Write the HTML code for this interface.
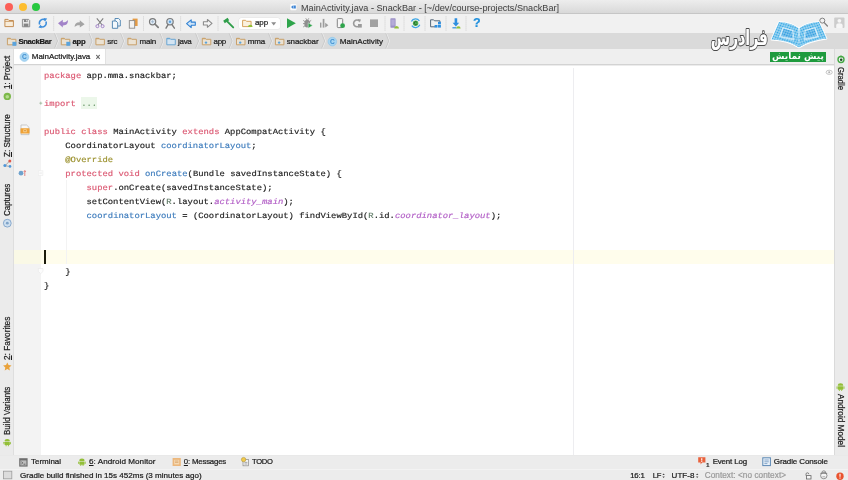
<!DOCTYPE html>
<html>
<head>
<meta charset="utf-8">
<title>MainActivity.java - SnackBar</title>
<style>
html,body{margin:0;padding:0;}
body{width:848px;height:480px;overflow:hidden;position:relative;background:#ececec;font-family:"Liberation Sans","DejaVu Sans",sans-serif;font-size:8px;color:#1c1c1c;}
#root{position:absolute;left:0;top:0;width:848px;height:480px;overflow:hidden;}
.abs{position:absolute;}
#titlebar{left:0;top:0;width:848px;height:13px;background:linear-gradient(#ededed,#d9d9d9);}
#titleline{left:0;top:13px;width:848px;height:1px;background:#c6c6c6;}
.tl{position:absolute;top:2.5px;width:8px;height:8px;border-radius:50%;}
#toolbar{left:0;top:14px;width:848px;height:19px;background:#f1f1f1;}
#navbar{left:0;top:33px;width:848px;height:15.6px;background:#dadada;}
#tabrow{left:0;top:48.6px;width:848px;height:16.4px;background:#efefef;}
#tabline{left:14px;top:64.2px;width:820px;height:1px;background:#d3d3d3;}
#tab{left:14px;top:48.6px;width:90.5px;height:16px;background:#fff;border-right:1px solid #e2e2e2;}
#leftstrip{left:0;top:49px;width:13.5px;height:406px;background:#ebebeb;border-right:1px solid #dedede;box-sizing:border-box;}
#rightstrip{left:833.5px;top:49px;width:14.5px;height:406px;background:#ebebeb;border-left:1px solid #dadada;box-sizing:border-box;}
#editor{left:13.5px;top:65.5px;width:820px;height:389.5px;background:#fff;}
#gutter{left:13.5px;top:65.5px;width:27px;height:389.5px;background:#f3f3f3;}
#caretrow{left:13.5px;top:250.4px;width:820px;height:14px;background:#fffdec;}
#caretrowg{left:13.5px;top:250.4px;width:27px;height:14px;background:#faf9e6;}
#caret{left:44px;top:250.4px;width:2px;height:13.2px;background:#1c1c0c;}
#margin{left:573.2px;top:68px;width:1.2px;height:387px;background:#ededf0;}
.guide{position:absolute;width:1px;background:#f3f3f3;}
#code{left:44px;top:69.7px;font-family:"Liberation Mono","DejaVu Sans Mono",monospace;font-size:8.875px;color:#222;-webkit-text-stroke:0.18px;text-rendering:geometricPrecision;}
.cl{position:absolute;left:0;height:15.556px;line-height:15.556px;white-space:pre;transform:scaleY(0.9);transform-origin:0 0;}
.k{color:#db5872;}
.f{color:#3f7dbd;}
.a{color:#9c9230;}
.s{color:#b25fc6;font-style:italic;}
.c{color:#5f7a66;}
.fold{color:#6f9a6f;}
#foldbg{left:80.6px;top:96.6px;width:16.4px;height:12.2px;background:#ecf7ea;}
#bottombar{left:0;top:455px;width:848px;height:14px;background:#ececec;border-top:1px solid #e9e9e9;box-sizing:border-box;}
#statusbar{left:0;top:469px;width:848px;height:11px;background:#ececec;border-top:1px solid #f3f3f3;box-sizing:border-box;}
.t{position:absolute;white-space:nowrap;line-height:12px;-webkit-text-stroke:0.22px;}
.v{transform-origin:0 0;color:#1c1c1c;}
#combo{left:238.8px;top:17.9px;width:40.8px;height:11.6px;background:#fff;border-radius:2.5px;box-shadow:0 0 0 0.5px #e4e4e4;}
#preview{left:770px;top:51.6px;width:56px;height:10.8px;background:#1f9b3e;}
#fg{position:absolute;left:0;top:0;width:848px;height:480px;will-change:transform;}
#previewt{left:770px;top:51.6px;width:56px;height:10.8px;color:#fff;font-family:"DejaVu Sans",sans-serif;font-weight:bold;font-size:9px;line-height:8.8px;text-align:center;direction:rtl;white-space:nowrap;}
#icons{left:0;top:0;width:848px;height:480px;}
</style>
</head>
<body>
<div id="root">
<div id="titlebar" class="abs"></div>
<div id="titleline" class="abs"></div>
<div class="tl" style="left:5px;background:#fc5f57;"></div>
<div class="tl" style="left:18.5px;background:#fdbd2e;"></div>
<div class="tl" style="left:32px;background:#27c83f;"></div>
<div id="toolbar" class="abs"></div>
<div id="navbar" class="abs"></div>
<div id="tabrow" class="abs"></div>
<div id="tab" class="abs"></div>
<div id="leftstrip" class="abs"></div>
<div id="editor" class="abs"></div>
<div id="gutter" class="abs"></div>
<div id="tabline" class="abs"></div>
<div id="caretrow" class="abs"></div>
<div id="caretrowg" class="abs"></div>
<div id="margin" class="abs"></div>
<div id="foldbg" class="abs"></div>
<div class="guide" style="left:66px;top:180px;height:84px;"></div>
<div id="caret" class="abs"></div>
<div id="rightstrip" class="abs"></div>

<div id="bottombar" class="abs"></div>
<div id="statusbar" class="abs"></div>
<div id="combo" class="abs"></div>
<div id="preview" class="abs"></div>
<div id="fg">
<div id="code" class="abs">
<div class="cl" style="top:0.0px"><span class="k">package</span> app.mma.snackbar;</div>
<div class="cl" style="top:28.0px"><span class="k">import</span> <span class="fold">...</span></div>
<div class="cl" style="top:56.0px"><span class="k">public class</span> MainActivity <span class="k">extends</span> AppCompatActivity {</div>
<div class="cl" style="top:70.0px">    CoordinatorLayout <span class="f">coordinatorLayout</span>;</div>
<div class="cl" style="top:84.0px">    <span class="a">@Override</span></div>
<div class="cl" style="top:98.0px">    <span class="k">protected void</span> <span class="f">onCreate</span>(Bundle savedInstanceState) {</div>
<div class="cl" style="top:112.0px">        <span class="k">super</span>.onCreate(savedInstanceState);</div>
<div class="cl" style="top:126.0px">        setContentView(<span class="c">R</span>.layout.<span class="s">activity_main</span>);</div>
<div class="cl" style="top:140.0px">        <span class="f">coordinatorLayout</span> = (CoordinatorLayout) findViewById(<span class="c">R</span>.id.<span class="s">coordinator_layout</span>);</div>
<div class="cl" style="top:196.0px">    }</div>
<div class="cl" style="top:210.0px">}</div>
</div>
<svg id="icons" class="abs" viewBox="0 0 848 480" width="848" height="480">
<defs>
<g id="fld"><path d="M0.5 1 h3 l0.9 1 h4.6 v5.5 h-8.5 z" fill="#ebe2d3" stroke="#c9a06a" stroke-width="1"/><path d="M0.5 1 h3 l0.9 1 h-3.9 z" fill="#c9a06a"/></g>
<g id="fldb"><path d="M0.5 1 h3 l0.9 1 h4.6 v5.5 h-8.5 z" fill="#d3e4f2" stroke="#6aa5d2" stroke-width="1"/><path d="M0.5 1 h3 l0.9 1 h-3.9 z" fill="#6aa5d2"/></g>
<g id="chev"><path d="M0 0.3 L3 8 L0 15.3" fill="none" stroke="#efefef" stroke-width="0.9" transform="translate(0.7,0)"/><path d="M0 0.3 L3 8 L0 15.3" fill="none" stroke="#c2c2c2" stroke-width="0.7"/></g>
<g id="droid"><path d="M1.2 3.4 a2.8 2.6 0 0 1 5.6 0 z" fill="#93bf38"/><rect x="1.2" y="3.9" width="5.6" height="3.6" rx="0.5" fill="#93bf38"/><rect x="0" y="3.9" width="0.9" height="2.8" rx="0.4" fill="#93bf38"/><rect x="7.1" y="3.9" width="0.9" height="2.8" rx="0.4" fill="#93bf38"/><rect x="2.3" y="7" width="1" height="1.8" rx="0.4" fill="#93bf38"/><rect x="4.7" y="7" width="1" height="1.8" rx="0.4" fill="#93bf38"/></g>
<g id="sep"><path d="M0 16.5 V31" stroke="#c4c4c4" stroke-width="0.9" stroke-dasharray="0.9 1.1"/></g>
<pattern id="grid" x="0" y="0" width="2.2" height="2.2" patternUnits="userSpaceOnUse"><rect x="0.3" y="0.3" width="1.6" height="1.6" fill="#4fb0e8"/></pattern>
</defs>

<!-- title icon -->
<rect x="290.3" y="4" width="6.2" height="6.2" rx="1" fill="#fbfbfb"/>
<path d="M291 7.1 l2.2 -1.8 v3.6 z M293.6 5.6 h2.2 v3 h-2.2 z" fill="#3f86d6"/>

<!-- toolbar separators -->
<use href="#sep" x="53.7"/><use href="#sep" x="89.4"/><use href="#sep" x="143.5"/><use href="#sep" x="180.6"/><use href="#sep" x="218"/><use href="#sep" x="385"/><use href="#sep" x="404"/><use href="#sep" x="425"/><use href="#sep" x="446"/><use href="#sep" x="466"/>

<!-- open -->
<path d="M4.9 19.4 h3.2 l0.9 1.1 h4.4 v6.1 h-8.5 z" fill="#f8ecd9" stroke="#c48f55" stroke-width="1"/>
<path d="M4.9 21.4 h8.5" stroke="#c48f55" stroke-width="0.8"/>
<!-- save -->
<path d="M22.4 19.4 h6.2 l1.1 1.1 v6.3 h-7.3 z" fill="#e6e6e6" stroke="#858585" stroke-width="0.9"/>
<rect x="24" y="19.4" width="3.6" height="2.6" fill="#858585"/><rect x="23.7" y="23.6" width="4.7" height="3.2" fill="#858585"/><rect x="26.2" y="19.8" width="0.9" height="1.6" fill="#e6e6e6"/>
<!-- sync -->
<g fill="none" stroke="#3f8fdc" stroke-width="1.5"><path d="M39.6 24.6 a3.6 3.9 0 0 1 5.6 -4.4"/><path d="M46 21.6 a3.6 3.9 0 0 1 -5.6 4.4"/></g>
<path d="M43.6 18 l3.6 0.6 l-2.2 2.8 z M42 28.2 l-3.6 -0.6 l2.2 -2.8 z" fill="#3f8fdc"/>
<!-- undo -->
<path d="M58 23.3 L62.8 27.4 L62.8 25.4 C66.2 25.5 68 24 68 20 C66.4 22 65 22.4 62.8 22.2 L62.8 19.8 Z" fill="#a283c8"/>
<!-- redo -->
<path d="M84.6 24.3 L79.8 20.2 L79.8 22.2 C76.4 22.1 74.6 23.6 74.6 27 C76.2 25.4 77.6 25.1 79.8 25.3 L79.8 27.4 Z" fill="#a4a4a4"/>
<!-- cut -->
<path d="M96.8 18.4 L102.2 25 M103.2 18.4 L97.8 25" stroke="#7d7d7d" stroke-width="1.1" fill="none"/>
<circle cx="97.4" cy="26.2" r="1.5" fill="none" stroke="#a283c8" stroke-width="1"/><circle cx="102.6" cy="26.2" r="1.5" fill="none" stroke="#a283c8" stroke-width="1"/>
<!-- copy -->
<path d="M115 18.5 h3.6 l1.7 1.7 v5.8 h-5.3 z" fill="#f3f8fc" stroke="#477fae" stroke-width="0.9"/>
<path d="M112.4 21 h3.6 l1.7 1.7 v5.6 h-5.3 z" fill="#f3f8fc" stroke="#477fae" stroke-width="0.9"/>
<!-- paste -->
<rect x="132.6" y="18.6" width="5" height="7.4" fill="#e49b45"/>
<rect x="129.3" y="20.6" width="5.4" height="7.6" fill="#f2f2f2" stroke="#8a8a8a" stroke-width="0.9"/>
<!-- find -->
<circle cx="152.6" cy="21.7" r="3.1" fill="#e1ecf6" stroke="#7b7b7b" stroke-width="1.2"/><path d="M154.9 24 L158.2 27.3" stroke="#7b7b7b" stroke-width="1.7" stroke-linecap="round"/><path d="M151 21.7 h3.2 M152.6 20.1 v3.2" stroke="#9ab0c8" stroke-width="0.7"/>
<!-- replace -->
<circle cx="170" cy="21.7" r="3.2" fill="#cfe4f7" stroke="#7b7b7b" stroke-width="1.2"/><path d="M168.2 24.4 L166 28.2 M171.8 24.4 L174.4 28.2" stroke="#7b7b7b" stroke-width="1.4" stroke-linecap="round"/><circle cx="170" cy="21.7" r="1.2" fill="#5fa3de"/>
<!-- back -->
<path d="M186.6 23.7 L191.2 19.8 L191.2 22.1 L195.3 22.1 L195.3 25.3 L191.2 25.3 L191.2 27.6 Z" fill="#cfe4f8" stroke="#2f80d2" stroke-width="1.1" stroke-linejoin="round"/>
<!-- forward -->
<path d="M212 23.4 L207.4 19.5 L207.4 21.8 L203.4 21.8 L203.4 25 L207.4 25 L207.4 27.3 Z" fill="#f4f4f4" stroke="#8b8b8b" stroke-width="1.1" stroke-linejoin="round"/>
<!-- hammer -->
<path d="M227.2 21.4 L233.2 27.4" stroke="#2f9e4a" stroke-width="1.9" stroke-linecap="round"/><path d="M224 22 L228.4 19" stroke="#2f9e4a" stroke-width="2.8"/>
<!-- combo content -->
<path d="M242.6 20.3 h3 l0.9 1 h4.6 v5.3 h-8.5 z" fill="#fbf1df" stroke="#d29a4e" stroke-width="0.9"/>
<path d="M248 26.9 a2.3 2.2 0 0 1 4.6 0 z" fill="#93bf38"/>
<path d="M271.2 22.2 h5 l-2.5 3.2 z" fill="#8d8d8d"/>
<!-- run -->
<path d="M287 18.2 L295.8 23.2 L287 28.2 Z" fill="#2ea44b"/>
<!-- debug -->
<ellipse cx="307.2" cy="23.6" rx="2.9" ry="3.9" fill="#8e8e8e"/><path d="M303.2 20.4 l2 1.4 M311.2 20.4 l-2 1.4 M303 23.6 h2 M303.2 27 l2 -1.4 M305.8 18.3 l1 1.6 M308.8 18.3 l-1 1.6" stroke="#8e8e8e" stroke-width="0.9"/>
<path d="M308.2 22.8 L312.6 25.5 L308.2 28.3 Z" fill="#2ea44b" stroke="#efefef" stroke-width="0.5"/>
<!-- profile -->
<rect x="320" y="22.6" width="1.4" height="5" fill="#9c9c9c"/><rect x="322.7" y="18.9" width="1.7" height="8.7" fill="#9c9c9c"/><path d="M325.2 22.8 L328.4 25.2 L325.2 27.6 Z" fill="#9c9c9c"/>
<!-- device -->
<rect x="337.3" y="18.6" width="5.4" height="9" rx="0.8" fill="#f6f6f6" stroke="#858585" stroke-width="1"/><circle cx="342.6" cy="25.7" r="2.4" fill="#2ea44b"/>
<!-- rerun -->
<path d="M359.4 21 a3.4 3.4 0 1 0 0.2 4.6" fill="none" stroke="#9a9a9a" stroke-width="1.6"/><path d="M357.8 19 l3.2 0.4 l-1.2 3 z" fill="#9a9a9a"/><rect x="358" y="24" width="3.8" height="3.6" fill="#9a9a9a"/>
<!-- stop -->
<rect x="370" y="19.4" width="8" height="7.6" fill="#a1a1a1"/>
<!-- avd -->
<rect x="390.4" y="18.3" width="5.2" height="9.4" rx="0.6" fill="#9c90c6"/><rect x="391.3" y="19.6" width="3.4" height="6" fill="#b4abd8"/>
<path d="M394.2 28.4 a2.4 2.5 0 0 1 4.8 0 z" fill="#93bf38"/>
<!-- gradle sync -->
<g fill="none" stroke="#3fa7e6" stroke-width="1.3"><path d="M411.4 21.6 a4.6 4.6 0 0 1 8 -0.6"/><path d="M419.8 24.8 a4.6 4.6 0 0 1 -8 0.8"/></g>
<circle cx="415.6" cy="23.2" r="2.7" fill="#4caf50"/><path d="M416.8 22.2 a1.5 1.5 0 1 0 0 2" fill="none" stroke="#225a2a" stroke-width="0.9"/>
<!-- project structure -->
<path d="M430.6 19.8 h3 l0.9 1 h5.4 v2.4 M435 26.8 h-4.4 v-7" fill="none" stroke="#56677a" stroke-width="1"/>
<rect x="438" y="21.8" width="2.9" height="2.6" fill="#2f8fe0"/><rect x="438" y="25" width="2.9" height="2.6" fill="#2f8fe0"/><rect x="434.6" y="25" width="2.9" height="2.6" fill="#2f8fe0"/>
<!-- sdk -->
<path d="M454.6 18.2 h2.6 v4.6 h2 l-3.3 3.6 l-3.3 -3.6 h2 z" fill="#2f8fe0"/><rect x="452.4" y="27.2" width="4" height="1.2" fill="#2f8fe0"/>
<path d="M456.2 28.5 a2.2 2.3 0 0 1 4.4 0 z" fill="#93bf38"/>

<!-- top-right search / user -->
<circle cx="822.3" cy="20.6" r="2.5" fill="none" stroke="#808080" stroke-width="1"/><path d="M824.2 22.6 L827.4 26" stroke="#808080" stroke-width="1.3" stroke-linecap="round"/>
<rect x="834.2" y="17.4" width="10.3" height="10.6" rx="1" fill="#cdcdcd"/><circle cx="839.4" cy="20.8" r="1.9" fill="#f6f6f6"/><path d="M836.2 28 v-2.4 a3.2 2.4 0 0 1 6.4 0 v2.4 z" fill="#f6f6f6"/>

<!-- nav bar -->
<use href="#fld" x="6.9" y="37.3"/><rect x="12.4" y="41.8" width="4" height="4" fill="#5aa3dc"/>
<use href="#fld" x="60.8" y="37.3"/><rect x="66.3" y="41.8" width="4" height="4" fill="#5aa3dc"/>
<use href="#fld" x="95.4" y="37.3"/>
<use href="#fld" x="127.4" y="37.3"/>
<use href="#fldb" x="166.3" y="37.3"/>
<use href="#fld" x="201.8" y="37.3"/><circle cx="206" cy="42.6" r="1.2" fill="#5aa3dc"/>
<use href="#fld" x="236" y="37.3"/><circle cx="240.2" cy="42.6" r="1.2" fill="#5aa3dc"/>
<use href="#fld" x="274.9" y="37.3"/><circle cx="279.1" cy="42.6" r="1.2" fill="#5aa3dc"/>
<circle cx="332.3" cy="41.6" r="4.3" fill="#a9d6f3" stroke="#8cc4ea" stroke-width="0.6"/>
<text x="332.3" y="44" font-family="Liberation Sans, sans-serif" font-size="6.6" font-weight="bold" fill="#3f8fd0" text-anchor="middle">C</text>
<use href="#chev" x="54.6" y="33"/><use href="#chev" x="89.1" y="33"/><use href="#chev" x="120.7" y="33"/><use href="#chev" x="160" y="33"/><use href="#chev" x="195.6" y="33"/><use href="#chev" x="229.2" y="33"/><use href="#chev" x="268.6" y="33"/><use href="#chev" x="321.7" y="33"/><use href="#chev" x="385.8" y="33"/>
<!-- tab icon -->
<circle cx="24.4" cy="57" r="4.4" fill="#a9d6f3" stroke="#8cc4ea" stroke-width="0.6"/>
<text x="24.4" y="59.4" font-family="Liberation Sans, sans-serif" font-size="6.6" font-weight="bold" fill="#3f8fd0" text-anchor="middle">C</text>

<!-- faradars logo -->
<g>
<clipPath id="cpL"><path d="M779 22 C786 22.3 793 24 798.4 28.2 L799 47.5 C792 42.6 782 40 771.4 39.6 Z"/></clipPath>
<clipPath id="cpR"><path d="M819 22 C812 22.3 805 24 799.6 28.2 L799 47.5 C806 42.6 816 40 826.6 38.6 Z"/></clipPath>
<path d="M779 22 C786 22.3 793 24 798.4 28.2 L799 47.5 C792 42.6 782 40 771.4 39.6 Z M819 22 C812 22.3 805 24 799.6 28.2 L799 47.5 C806 42.6 816 40 826.6 38.6 Z" fill="#fff" stroke="#fff" stroke-width="1.6" stroke-linejoin="round"/>
<pattern id="gridL" width="2.3" height="2.3" patternUnits="userSpaceOnUse" patternTransform="matrix(1 0.3 -0.42 1 0 0)"><rect x="0.25" y="0.25" width="1.85" height="1.85" fill="#2fa5e3"/></pattern>
<pattern id="gridR" width="2.3" height="2.3" patternUnits="userSpaceOnUse" patternTransform="matrix(1 -0.3 0.42 1 0 0)"><rect x="0.25" y="0.25" width="1.85" height="1.85" fill="#2fa5e3"/></pattern>
<pattern id="gridLd" width="2.3" height="2.3" patternUnits="userSpaceOnUse" patternTransform="matrix(1 0.3 -0.42 1 0 0)"><rect x="0.25" y="0.25" width="1.85" height="1.85" fill="#2a9ade"/></pattern>
<pattern id="gridRd" width="2.3" height="2.3" patternUnits="userSpaceOnUse" patternTransform="matrix(1 -0.3 0.42 1 0 0)"><rect x="0.25" y="0.25" width="1.85" height="1.85" fill="#2a9ade"/></pattern>
<g clip-path="url(#cpL)"><rect x="765" y="18" width="40" height="34" fill="url(#gridL)"/>
<path d="M782.5 27 L793.5 30 L794 40.5 L779 37 Z" fill="#fff" opacity="0.62"/><path d="M783.5 28.6 L792.3 31 L792.7 38.6 L781.2 36 Z" fill="url(#gridLd)"/></g>
<g clip-path="url(#cpR)"><rect x="795" y="18" width="40" height="34" fill="url(#gridR)"/>
<path d="M815.5 27 L804.5 30 L804 40.5 L819 37 Z" fill="#fff" opacity="0.62"/><path d="M814.5 28.6 L805.7 31 L805.3 38.6 L816.8 36 Z" fill="url(#gridRd)"/></g>
<g transform="translate(739.4 44.7) scale(0.70 1.07)" text-anchor="middle" font-family="DejaVu Sans, sans-serif" font-weight="bold" font-size="20" stroke-linejoin="round">
<text x="0" y="0" fill="#4a4a4a" stroke="#4a4a4a" stroke-width="1.9" vector-effect="non-scaling-stroke">فرادرس</text>
<text x="0" y="0" fill="#fff" stroke="#fff" stroke-width="0.1" vector-effect="non-scaling-stroke">فرادرس</text>
</g>
</g>

<!-- eye -->
<ellipse cx="829.2" cy="72.3" rx="3.1" ry="2.1" fill="#fafafa" stroke="#b0b0b0" stroke-width="0.7"/><circle cx="829.2" cy="72.3" r="1" fill="#b0b0b0"/>

<!-- right strip -->
<circle cx="841" cy="59.5" r="3" fill="#f4f4f4" stroke="#45a845" stroke-width="1.4"/><circle cx="841.2" cy="59.7" r="1.3" fill="#1f4f28"/><path d="M839 56.6 l2.4 -1.4 l0.2 2.6 z" fill="#45a845"/>
<g transform="translate(836.6 382.6) scale(0.98 0.95)"><use href="#droid"/></g>

<!-- left strip icons -->
<circle cx="7.3" cy="96.4" r="3.7" fill="#7cb84a"/><circle cx="7.3" cy="96.8" r="1.8" fill="#b5dc8e"/>
<path d="M5 165.8 L9.6 161 M5 165.8 L10 166.4" stroke="#8c8c8c" stroke-width="0.7"/><circle cx="4.9" cy="165.6" r="1.5" fill="#4f96d8"/><circle cx="9.8" cy="161" r="1.5" fill="#e0584a"/><circle cx="10" cy="166.4" r="1.3" fill="#4f96d8"/>
<circle cx="7.3" cy="223.2" r="3.9" fill="#cfe0f0" stroke="#7fa3c8" stroke-width="0.9"/><circle cx="7.3" cy="223.2" r="1.4" fill="#7fa3c8"/>
<path d="M7.3 362.4 l1.25 2.7 l2.95 0.35 l-2.2 2 l0.6 2.95 l-2.6 -1.5 l-2.6 1.5 l0.6 -2.95 l-2.2 -2 l2.95 -0.35 z" fill="#e9a23b"/>
<g transform="translate(3.5 438.2) scale(0.93 0.92)"><use href="#droid"/></g>

<!-- gutter icons -->
<path d="M21 125 h5.6 l2.4 2.4 v7.2 h-8 z" fill="#f7f7f7" stroke="#b4b4b4" stroke-width="0.7"/><rect x="20.5" y="128.2" width="9" height="5.2" rx="0.6" fill="#f0a236"/><rect x="23.4" y="129.4" width="3.2" height="2.8" fill="#fbd9a0"/><circle cx="25" cy="130.8" r="0.8" fill="#c9801f"/>
<circle cx="21" cy="173.2" r="2.35" fill="#6ea2cd"/><path d="M24.8 176 v-5.2 M23.8 171.9 l1 -1.4 l1 1.4" stroke="#e07a78" stroke-width="0.9" fill="none"/>
<path d="M39.3 103.2 h3 M40.8 101.7 v3" stroke="#8fb08f" stroke-width="0.7"/>
<rect x="38.3" y="170.8" width="4.6" height="4.6" fill="#fcfcfc" stroke="#ebebeb" stroke-width="0.6"/><path d="M39.4 173.1 h2.4" stroke="#dcdcdc" stroke-width="0.6"/>
<path d="M38.4 268.5 h4.6 v3 l-2.3 2.2 l-2.3 -2.2 z" fill="#fcfcfc" stroke="#e8e8e8" stroke-width="0.6"/>

<!-- bottom bar icons -->
<rect x="19.2" y="458.2" width="8.4" height="8.4" fill="#6e6e6e"/><rect x="20.4" y="460.4" width="6" height="5" fill="#bdbdbd"/><path d="M21.4 461.8 l1.4 1.1 l-1.4 1.1 M23.6 464.2 h1.8" stroke="#444" stroke-width="0.7" fill="none"/>
<g transform="translate(78.2 457.8) scale(0.93 0.92)"><use href="#droid"/></g>
<rect x="172.6" y="458" width="8.2" height="8" fill="#ecb77c"/><rect x="174.2" y="459.8" width="5" height="4.6" fill="#f6d9b4"/><path d="M175 461 h3.4 M175 462.4 h3.4" stroke="#d09550" stroke-width="0.6"/>
<rect x="243" y="459.6" width="5.6" height="6.2" fill="#f3f3f3" stroke="#8a8a8a" stroke-width="0.7"/><circle cx="243.6" cy="459.6" r="2.2" fill="#f2c94c" stroke="#a58a2a" stroke-width="0.5"/><path d="M244.4 462.4 h3 M244.4 464 h3" stroke="#777" stroke-width="0.6"/>
<path d="M698.2 457.2 h7.2 v5.4 h-3.2 l-1.6 1.8 v-1.8 h-2.4 z" fill="#e9623c"/><rect x="701.2" y="458.2" width="1.1" height="2.4" fill="#fff"/><rect x="701.2" y="461" width="1.1" height="0.9" fill="#fff"/>
<rect x="762.8" y="457.8" width="7.6" height="7.8" fill="#eaf2fa" stroke="#5b88b4" stroke-width="1"/><path d="M764.4 460 h4.4 M764.4 461.8 h4.4 M764.4 463.6 h3" stroke="#5b88b4" stroke-width="0.7"/>

<!-- status bar icons -->
<rect x="3.4" y="471.2" width="8.4" height="7.6" fill="#dcdcdc" stroke="#9c9c9c" stroke-width="0.8"/>
<path d="M662.4 475 l1.2 -1.6 l1.2 1.6 z M662.4 476.4 l1.2 1.6 l1.2 -1.6 z" fill="#444"/>
<path d="M696 475 l1.2 -1.6 l1.2 1.6 z M696 476.4 l1.2 1.6 l1.2 -1.6 z" fill="#444"/>
<rect x="806.6" y="475.6" width="4.4" height="3.4" fill="#f4f4f4" stroke="#666" stroke-width="0.8"/><path d="M806 475.6 v-1.4 a1.4 1.4 0 0 1 2.8 0" fill="none" stroke="#666" stroke-width="0.8"/>
<circle cx="823.8" cy="475.6" r="3.2" fill="#f4f4f4" stroke="#777" stroke-width="0.8"/><path d="M820.4 473.4 h6.8 M821.8 473.2 a2 2.4 0 0 1 4 0" stroke="#777" stroke-width="0.8" fill="none"/><path d="M822.4 476.8 h2.8" stroke="#777" stroke-width="0.6"/>
<circle cx="840" cy="476.2" r="3.7" fill="#e9532f"/><rect x="839.45" y="473.8" width="1.1" height="3" fill="#fff"/><rect x="839.45" y="477.5" width="1.1" height="1.1" fill="#fff"/>
</svg>

<div id="previewt" class="abs">پیش نمایش</div>
<div class="t" style="left:301.0px;top:1.6px;font-size:9.1px;letter-spacing:0.02px;color:#454545;-webkit-text-stroke:0.05px;">MainActivity.java - SnackBar - [~/dev/course-projects/SnackBar]</div>
<div class="t" style="left:18.4px;top:35.9px;font-size:7.7px;letter-spacing:-0.31px;color:#1c1c1c;font-weight:bold;">SnackBar</div>
<div class="t" style="left:72.6px;top:35.9px;font-size:7.7px;letter-spacing:-0.29px;color:#1c1c1c;font-weight:bold;">app</div>
<div class="t" style="left:107.3px;top:35.9px;font-size:8px;letter-spacing:-0.26px;color:#1c1c1c;">src</div>
<div class="t" style="left:139.6px;top:35.9px;font-size:8px;letter-spacing:-0.21px;color:#1c1c1c;">main</div>
<div class="t" style="left:178.0px;top:35.9px;font-size:8px;letter-spacing:-0.30px;color:#1c1c1c;">java</div>
<div class="t" style="left:213.6px;top:35.9px;font-size:8px;letter-spacing:-0.39px;color:#1c1c1c;">app</div>
<div class="t" style="left:247.8px;top:35.9px;font-size:8px;letter-spacing:-0.19px;color:#1c1c1c;">mma</div>
<div class="t" style="left:286.7px;top:35.9px;font-size:8px;letter-spacing:-0.08px;color:#1c1c1c;">snackbar</div>
<div class="t" style="left:339.8px;top:35.9px;font-size:8.1px;letter-spacing:0.00px;color:#1c1c1c;">MainActivity</div>
<div class="t" style="left:31.8px;top:51.3px;font-size:8px;letter-spacing:-0.03px;color:#1c1c1c;">MainActivity.java</div>
<div class="t" style="left:95.5px;top:51.1px;font-size:8.5px;letter-spacing:-0.27px;color:#555;">×</div>
<div class="t" style="left:255.0px;top:17.2px;font-size:8px;letter-spacing:-0.12px;color:#222;">app</div>
<div class="t" style="left:31.0px;top:456.0px;font-size:8px;letter-spacing:-0.03px;color:#1c1c1c;">Terminal</div>
<div class="t" style="left:89.0px;top:456.0px;font-size:8.1px;letter-spacing:0.05px;color:#1c1c1c;"><u>6</u>: Android Monitor</div>
<div class="t" style="left:183.8px;top:456.0px;font-size:7.8px;letter-spacing:-0.18px;color:#1c1c1c;"><u>0</u>: Messages</div>
<div class="t" style="left:252.0px;top:456.0px;font-size:7.6px;letter-spacing:-0.28px;color:#1c1c1c;">TODO</div>
<div class="t" style="left:712.7px;top:456.0px;font-size:7.9px;letter-spacing:-0.15px;color:#1c1c1c;">Event Log</div>
<div class="t" style="left:773.8px;top:456.0px;font-size:8px;letter-spacing:-0.11px;color:#1c1c1c;">Gradle Console</div>
<div class="t" style="left:20.0px;top:470.4px;font-size:8.05px;letter-spacing:-0.00px;color:#1c1c1c;">Gradle build finished in 15s 452ms (3 minutes ago)</div>
<div class="t" style="left:630.2px;top:470.4px;font-size:7.8px;letter-spacing:-0.17px;color:#1c1c1c;">16:1</div>
<div class="t" style="left:652.8px;top:470.4px;font-size:7.6px;letter-spacing:-0.34px;color:#1c1c1c;">LF</div>
<div class="t" style="left:671.6px;top:470.4px;font-size:8px;letter-spacing:0.05px;color:#1c1c1c;">UTF-8</div>
<div class="t" style="left:704.7px;top:470.4px;font-size:8.2px;letter-spacing:0.06px;color:#9a9a9a;">Context: &lt;no context&gt;</div>
<div class="t" style="left:706.3px;top:458.7px;font-size:5.5px;letter-spacing:-0.36px;color:#333;font-weight:bold;">1</div>
<div class="t" style="left:473.0px;top:17.2px;font-size:12.5px;letter-spacing:-0.64px;color:#1f8fdc;font-weight:bold;">?</div>
<div class="t v" style="left:1.3px;top:88.6px;transform:rotate(-90deg) scaleX(0.907);font-size:8.7px;"><u>1</u>: Project</div>
<div class="t v" style="left:1.3px;top:157.3px;transform:rotate(-90deg) scaleX(0.941);font-size:8.7px;"><u>Z</u>: Structure</div>
<div class="t v" style="left:1.3px;top:215.8px;transform:rotate(-90deg) scaleX(0.916);font-size:8.7px;">Captures</div>
<div class="t v" style="left:1.3px;top:360.0px;transform:rotate(-90deg) scaleX(0.954);font-size:8.7px;"><u>2</u>: Favorites</div>
<div class="t v" style="left:1.3px;top:435.0px;transform:rotate(-90deg) scaleX(0.912);font-size:8.7px;">Build Variants</div>
<div class="t v" style="left:847.0px;top:66.8px;transform:rotate(90deg) scaleX(0.882);font-size:8.7px;">Gradle</div>
<div class="t v" style="left:846.9px;top:394.0px;transform:rotate(90deg) scaleX(0.946);font-size:8.7px;">Android Model</div>
</div>
</div>
</body>
</html>
